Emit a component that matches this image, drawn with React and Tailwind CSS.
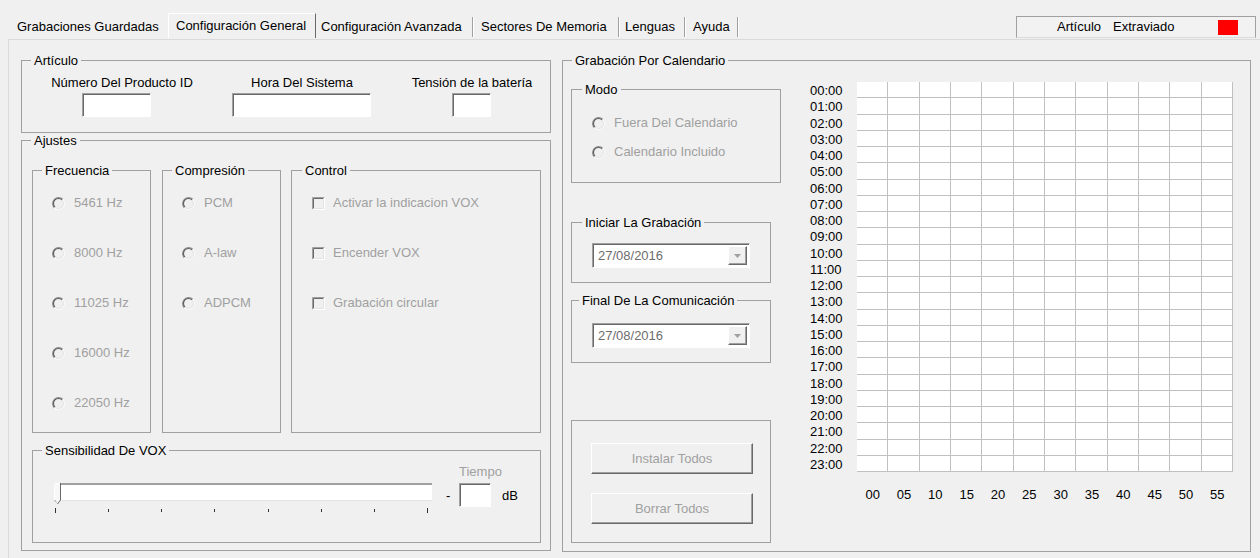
import React from "react";

const hours = Array.from({ length: 24 }, (_, i) => `${String(i).padStart(2, "0")}:00`);
const minutes = Array.from({ length: 12 }, (_, i) => String(i * 5).padStart(2, "0"));
const cells = Array.from({ length: 24 * 12 }, (_, i) => i);

const tabs = [
  { label: "Grabaciones Guardadas", cls: "w-[160px] pl-[9px] h-[22px] leading-[22px]" },
  { label: "Configuración General", cls: "w-[148px] pl-[7px] h-[25px] leading-[24px] border-t border-l border-t-white border-l-white border-r border-r-[#696969]", active: true },
  { label: "Configuración Avanzada", cls: "w-[156px] pl-[5px] h-[22px] leading-[22px]", sep: true },
  { label: "Sectores De Memoria", cls: "w-[144px] pl-[7px] h-[22px] leading-[22px]", sep: true },
  { label: "Lenguas", cls: "w-[64px] pl-[5px] h-[22px] leading-[22px]", sep: true },
  { label: "Ayuda", cls: "w-[51px] pl-[7px] h-[22px] leading-[22px]", sep: true },
];

function Radio() {
  return (
    <svg width="13" height="13" viewBox="0 0 13 13" className="shrink-0">
      <circle cx="6.5" cy="6.5" r="5" fill="#f0f0f0" />
      <path d="M2.26 10.74A6 6 0 0 1 10.74 2.26" stroke="#8c8c8c" strokeWidth="1.2" fill="none" />
      <path d="M2.96 10.04A5 5 0 0 1 10.04 2.96" stroke="#5a5a5a" strokeWidth="1.1" fill="none" />
      <path d="M10.74 2.26A6 6 0 0 1 2.26 10.74" stroke="#ffffff" fill="none" />
      <path d="M10.04 2.96A5 5 0 0 1 2.96 10.04" stroke="#e3e3e3" fill="none" />
    </svg>
  );
}

function Check() {
  return (
    <svg width="13" height="13" viewBox="0 0 13 13" className="shrink-0">
      <rect x="0" y="0" width="13" height="13" fill="#f0f0f0" />
      <path d="M0.5 12.5V0.5H12.5" stroke="#a0a0a0" fill="none" />
      <path d="M1.5 11.5V1.5H11.5" stroke="#696969" fill="none" />
      <path d="M0.5 12.5H12.5V0.5" stroke="#ffffff" fill="none" />
      <path d="M1.5 11.5H11.5V1.5" stroke="#e3e3e3" fill="none" />
    </svg>
  );
}

function Group({ label, legend = "ml-[9px]", className, children }) {
  return (
    <fieldset className={`border border-[#a0a0a0] shrink-0 ${className}`}>
      {label && <legend className={`px-[3px] leading-[15px] whitespace-nowrap ${legend}`}>{label}</legend>}
      {children}
    </fieldset>
  );
}

function RadioRow({ label, className = "" }) {
  return (
    <div className={`flex items-center h-[16px] ${className}`}>
      <Radio />
      <span className="ml-[9px] text-[#a0a0a0] whitespace-nowrap">{label}</span>
    </div>
  );
}

function CheckRow({ label, className = "" }) {
  return (
    <div className={`flex items-center h-[16px] ml-[20px] ${className}`}>
      <Check />
      <span className="ml-[8px] text-[#a0a0a0] whitespace-nowrap">{label}</span>
    </div>
  );
}

const sunken =
  "bg-white border border-t-[#a0a0a0] border-l-[#a0a0a0] border-r-white border-b-white shadow-[inset_1px_1px_0_#696969]";
const raised =
  "bg-[#f0f0f0] border border-t-white border-l-white border-r-[#696969] border-b-[#696969] shadow-[inset_-1px_-1px_0_#a0a0a0]";

function Combo({ className = "" }) {
  return (
    <div className={`flex w-[158px] h-[25px] p-[2px] ${sunken} ${className}`}>
      <div className="flex-1 pl-[3px] leading-[19px] text-[#6d6d6d]">27/08/2016</div>
      <div className={`w-[19px] h-full flex items-center justify-center ${raised}`}>
        <svg width="7" height="4" viewBox="0 0 7 4">
          <path d="M0 0H7L3.5 4Z" fill="#a0a0a0" />
        </svg>
      </div>
    </div>
  );
}

function Button({ label, className = "" }) {
  return (
    <div className={`w-[162px] h-[31px] flex items-center justify-center text-[#a0a0a0] ${raised} ${className}`}>
      {label}
    </div>
  );
}

export default function App() {
  return (
    <div className="w-[1260px] h-[558px] overflow-hidden bg-[#f0f0f0] text-[13px] text-black font-['Liberation_Sans',Arial,sans-serif]">
      {/* tab strip */}
      <div className="flex h-[39px]">
        <div className="flex items-end pl-[8px] pb-[1px]">
          {tabs.map((t) => (
            <React.Fragment key={t.label}>
              <div className={`whitespace-nowrap shrink-0 ${t.cls}`}>{t.label}</div>
              {t.sep && <div className="h-[20px] w-[2px] mb-[1px] border-l border-l-[#a0a0a0] border-r border-r-white shrink-0" />}
            </React.Fragment>
          ))}
        </div>
        <div className="ml-auto mr-[4px] mt-[16px] w-[240px] h-[22px] flex items-center border border-[#a0a0a0] border-b-[#dcdcdc] bg-[#f2f2f2]">
          <span className="ml-[40px] whitespace-nowrap">Artículo</span>
          <span className="ml-[12px] whitespace-nowrap">Extraviado</span>
          <div className="ml-auto mr-[17px] w-[20px] h-[15px] bg-[#ff0000]" />
        </div>
      </div>

      {/* page */}
      <div className="ml-[8px] h-[519px] border-t border-l border-[#dadada] pt-[13px] pl-[12px] flex items-start">
        {/* left column */}
        <div className="w-[530px] shrink-0">
          <Group label="Artículo" className="w-[530px] h-[80px]">
            <div className="flex">
              <div className="w-[200px]">
                <div className="mt-[7px] leading-[15px] text-center whitespace-nowrap">Número Del Producto ID</div>
                <div className={`mt-[3px] ml-[60px] w-[69px] h-[24px] ${sunken}`} />
              </div>
              <div className="w-[160px]">
                <div className="mt-[7px] leading-[15px] text-center whitespace-nowrap">Hora Del Sistema</div>
                <div className={`mt-[3px] ml-[10px] w-[139px] h-[24px] ${sunken}`} />
              </div>
              <div className="ml-[12px] w-[156px]">
                <div className="mt-[7px] leading-[15px] text-center whitespace-nowrap">Tensión de la batería</div>
                <div className={`mt-[3px] ml-[58px] w-[39px] h-[24px] ${sunken}`} />
              </div>
            </div>
          </Group>

          <Group label="Ajustes" className="w-[530px] h-[418px]">
            <div className="pl-[10px]">
              <div className="flex mt-[15px]">
                <Group label="Frecuencia" className="w-[119px] h-[270px]">
                  <div className="ml-[19px] mt-[17px] flex flex-col gap-[34px]">
                    <RadioRow label="5461 Hz" />
                    <RadioRow label="8000 Hz" />
                    <RadioRow label="11025 Hz" />
                    <RadioRow label="16000 Hz" />
                    <RadioRow label="22050 Hz" />
                  </div>
                </Group>
                <Group label="Compresión" className="ml-[11px] w-[119px] h-[270px]">
                  <div className="ml-[19px] mt-[17px] flex flex-col gap-[34px]">
                    <RadioRow label="PCM" />
                    <RadioRow label="A-law" />
                    <RadioRow label="ADPCM" />
                  </div>
                </Group>
                <Group label="Control" legend="ml-[10px]" className="ml-[10px] w-[250px] h-[270px]">
                  <div className="mt-[17px] flex flex-col gap-[34px]">
                    <CheckRow label="Activar la indicacion VOX" />
                    <CheckRow label="Encender VOX" />
                    <CheckRow label="Grabación circular" />
                  </div>
                </Group>
              </div>

              <Group label="Sensibilidad De VOX" className="mt-[10px] w-[509px] h-[100px]">
                <div className="flex items-start">
                  <div className="ml-[21px] mt-[25px] w-[378px] shrink-0">
                    <div className="relative h-[18px] bg-white border-t-2 border-t-[#a0a0a0] border-b border-b-[#e3e3e3]">
                      <svg width="8" height="22" viewBox="0 0 8 22" className="absolute left-0 top-[-2px]">
                        <path d="M0.5 0.5H6.5V17L3.5 21L0.5 17Z" fill="#f7f7f7" />
                        <path d="M0.5 17V0.5H6.5" stroke="#ffffff" fill="none" />
                        <path d="M6.5 0V17L3.5 21" stroke="#696969" fill="none" />
                        <path d="M0.5 17L2.5 19.5" stroke="#a0a0a0" fill="none" />
                      </svg>
                    </div>
                    <div className="ml-[1px] w-[373px] mt-[7px] flex justify-between items-start">
                      {Array.from({ length: 8 }, (_, i) => (
                        <div
                          key={i}
                          className={i === 0 || i === 7 ? "w-px h-[5px] bg-[#333]" : "w-px h-[3px] mt-[1px] bg-[#333]"}
                        />
                      ))}
                    </div>
                  </div>
                  <div className="ml-[14px] w-[13px] mt-[31px] leading-[14px] shrink-0">-</div>
                  <div className="w-[32px] shrink-0">
                    <div className="mt-[7px] leading-[14px] text-[#a0a0a0] whitespace-nowrap">Tiempo</div>
                    <div className={`mt-[4px] w-[32px] h-[24px] ${sunken}`} />
                  </div>
                  <div className="ml-[11px] mt-[31px] leading-[14px]">dB</div>
                </div>
              </Group>
            </div>
          </Group>
        </div>

        {/* right column */}
        <Group label="Grabación Por Calendario" className="ml-[11px] w-[689px] h-[499px]">
          <div className="flex items-start pl-[8px]">
            <div className="w-[210px] shrink-0">
              <Group label="Modo" legend="ml-[10px]" className="mt-[14px] w-[210px] h-[101px]">
                <div className="ml-[20px] mt-[18px] flex flex-col gap-[13px]">
                  <RadioRow label="Fuera Del Calendario" />
                  <RadioRow label="Calendario Incluido" />
                </div>
              </Group>
              <Group label="Iniciar La Grabación" legend="ml-[10px]" className="mt-[32px] w-[200px] h-[68px]">
                <Combo className="ml-[20px] mt-[13px]" />
              </Group>
              <Group label="Final De La Comunicación" legend="ml-[7px]" className="mt-[10px] w-[200px] h-[70px]">
                <Combo className="ml-[20px] mt-[15px]" />
              </Group>
              <Group className="mt-[57px] w-[200px] h-[123px]">
                <Button label="Instalar Todos" className="ml-[19px] mt-[22px]" />
                <Button label="Borrar Todos" className="ml-[19px] mt-[19px]" />
              </Group>
            </div>

            <div className="ml-[29px] mt-[15px] w-[47px] shrink-0 grid grid-rows-24 h-[390px]">
              {hours.map((h) => (
                <div key={h} className="leading-[16px]">{h}</div>
              ))}
            </div>

            <div className="mt-[14px] w-[376px] shrink-0">
              <div className="grid grid-cols-12 grid-rows-24 h-[390px] bg-white">
                {cells.map((c) => (
                  <div key={c} className="border-r border-b border-[#c0c0c0]" />
                ))}
              </div>
              <div className="grid grid-cols-12 mt-[16px] leading-[13px] text-center">
                {minutes.map((m) => (
                  <div key={m}>{m}</div>
                ))}
              </div>
            </div>
          </div>
        </Group>
      </div>
    </div>
  );
}
